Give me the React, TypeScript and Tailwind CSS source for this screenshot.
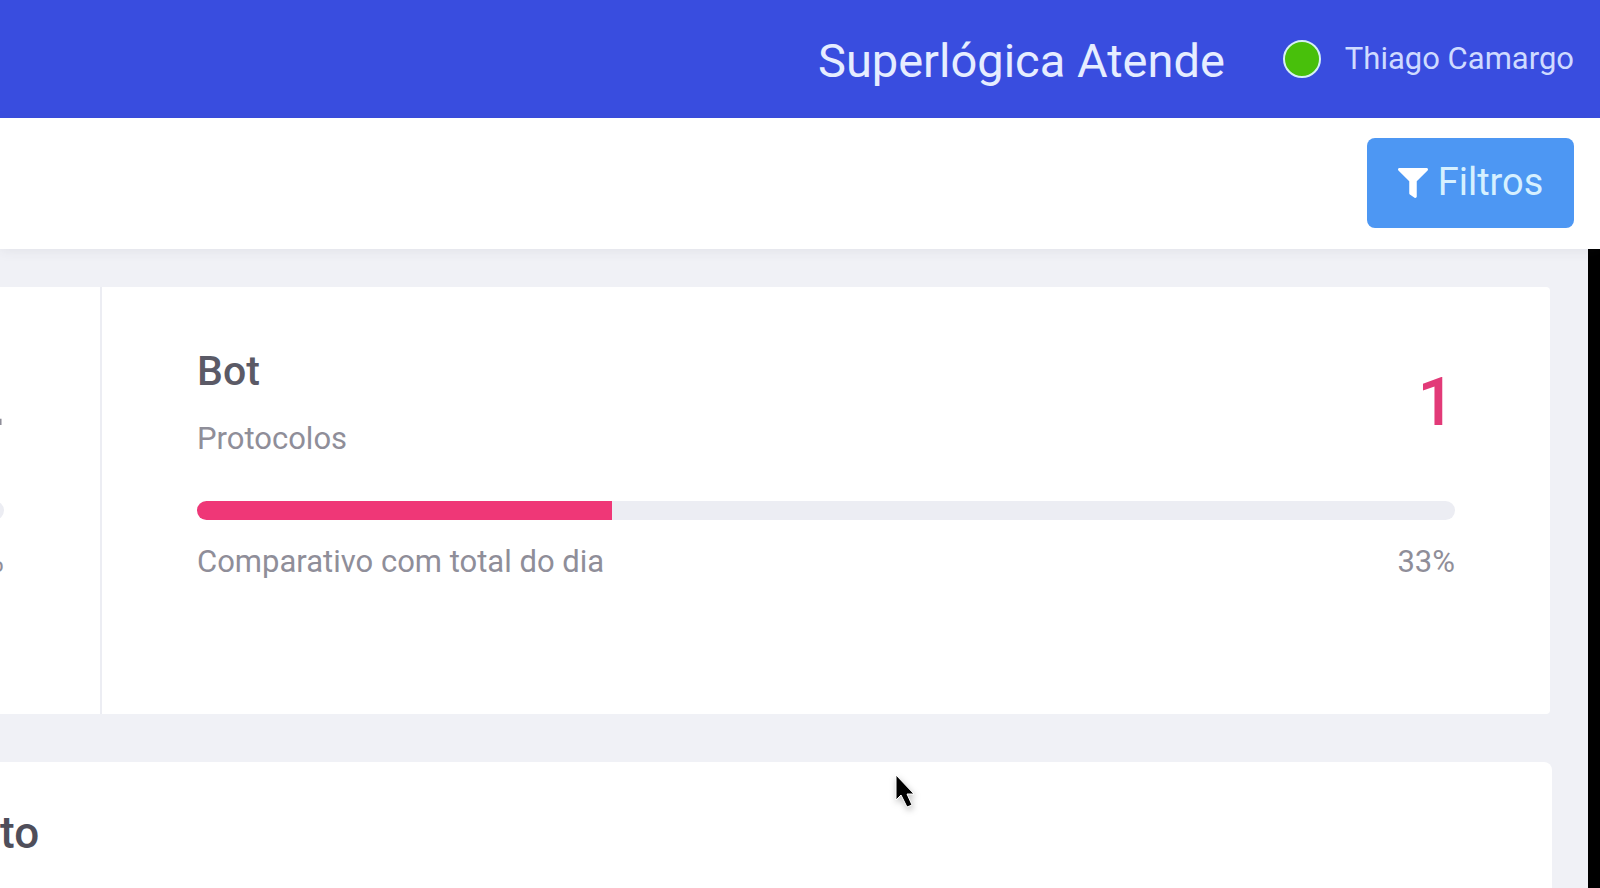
import { FaFilter } from "react-icons/fa";

interface StatPanelProps {
  title?: string;
  subtitle?: string;
  caption?: string;
  value: number;
  percentLabel: string;
  percent: number;
  valueClass: string;
  barClass: string;
}

function StatPanel({
  title,
  subtitle,
  caption,
  value,
  percentLabel,
  percent,
  valueClass,
  barClass,
}: StatPanelProps) {
  return (
    <div className="pt-14 pb-32">
      <div className="flex h-[120px] items-center justify-between">
        <div>
          {title && (
            <h3 className="text-[41px] leading-[56px] font-medium text-[#5b5a66]">
              {title}
            </h3>
          )}
          {subtitle && (
            <p className="mt-4 text-[31px] leading-[48px] text-[#8f8e99]">
              {subtitle}
            </p>
          )}
        </div>
        <span className={`text-[66px] leading-[80px] font-medium ${valueClass}`}>
          {value}
        </span>
      </div>
      <div className="mt-[38px] h-[19px] overflow-hidden rounded-full bg-[#ecedf3]">
        <div className={`h-full ${barClass}`} style={{ width: `${percent}%` }} />
      </div>
      <div className="mt-[18px] flex text-[31px] leading-[48px] text-[#8f8e99]">
        {caption && <span>{caption}</span>}
        <span className="ml-auto">{percentLabel}</span>
      </div>
    </div>
  );
}

function Header() {
  return (
    <header className="flex h-[118px] items-center justify-end bg-[#394ddf] pr-[26px] text-[#e6edff]">
      <h1 className="pt-1 text-[47px] leading-[56px]">Superlógica Atende</h1>
      <span className="ml-[58px] size-[38px] rounded-full border-2 border-[#d5f0f5] bg-[#48c00b]" />
      <span className="ml-6 text-[31px] leading-[40px] text-[#cfdbff]">
        Thiago Camargo
      </span>
    </header>
  );
}

function Toolbar() {
  return (
    <div className="relative flex h-[131px] items-center justify-end bg-white pr-[26px] shadow-[0_2px_12px_rgba(60,60,80,0.08)]">
      <button
        type="button"
        className="mb-0.5 flex h-[90px] w-[207px] items-center justify-center gap-2.5 rounded-lg bg-[#4d97f3] text-[38px] text-[#d6f0ff]"
      >
        <FaFilter className="size-[30px] text-white" />
        Filtros
      </button>
    </div>
  );
}

function Cursor() {
  return (
    <svg
      className="pointer-events-none absolute top-[773px] left-[894px] h-[40px] w-[26px] drop-shadow-[1px_3px_3px_rgba(0,0,0,0.25)]"
      viewBox="0 0 26 40"
      aria-hidden="true"
    >
      <path
        d="M2 2v25l5-5 6 12 5-2-5-11h7z"
        fill="#000"
        stroke="#fff"
        strokeWidth="1"
      />
    </svg>
  );
}

export default function App() {
  return (
    <div
      lang="pt-BR"
      className="relative flex min-h-screen flex-col overflow-hidden bg-[#f0f1f6] font-['Roboto',sans-serif]"
    >
      <Header />
      <Toolbar />
      <main className="flex flex-1 flex-col border-r-12 border-black">
        <section className="mt-[38px] mr-[38px] flex rounded-r bg-white">
          {/* previous panel is scrolled out to the left */}
          <div className="flex w-[102px] shrink-0 justify-end overflow-hidden border-r-2 border-[#ecedf3] pr-[96px]">
            <div className="w-[120px] shrink-0">
              <StatPanel
                value={2}
                percentLabel="%"
                percent={67}
                valueClass="ml-auto text-[#8f8e99]"
                barClass="bg-[#394ddf]"
              />
            </div>
          </div>
          <div className="flex-1 px-[95px]">
            <StatPanel
              title="Bot"
              subtitle="Protocolos"
              caption="Comparativo com total do dia"
              value={1}
              percentLabel="33%"
              percent={33}
              valueClass="text-[#e23a78]"
              barClass="bg-[#ef3777]"
            />
          </div>
        </section>
        <section className="mt-12 mr-9 flex-1 rounded-tr-lg bg-white pt-[43px]">
          <h2 className="text-[44px] leading-[56px] font-medium text-[#4f4e5a]">
            to
          </h2>
        </section>
      </main>
      <Cursor />
    </div>
  );
}
